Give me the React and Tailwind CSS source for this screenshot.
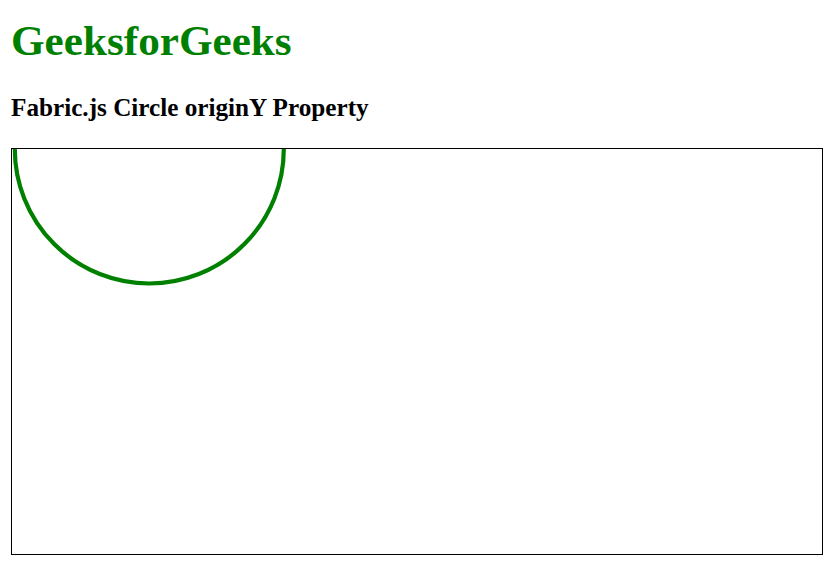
import React from 'react';

const serif = "font-['Liberation_Serif','Times_New_Roman',serif]";

const App = () => {
  return (
    <div className={`min-h-screen bg-white pl-[11px] pt-[19px] ${serif}`}>
      <h1 className="text-[43.2px] leading-[43px] font-bold text-[#008000]">GeeksforGeeks</h1>
      <h2 className="mt-[33px] text-[25.2px] leading-[25px] font-bold text-black">
        Fabric.js Circle originY Property
      </h2>
      <div className="relative mt-[28px] h-[407px] w-[812px] overflow-hidden border border-black bg-white">
        {/* circle drawn on the canvas, origin at its bottom edge */}
        <svg className="absolute left-0 top-0" width="810" height="405" viewBox="0 0 810 405">
          <circle cx="137.3" cy="0" r="134.5" fill="none" stroke="#008000" strokeWidth="4.2" />
        </svg>
      </div>
    </div>
  );
};

export default App;
